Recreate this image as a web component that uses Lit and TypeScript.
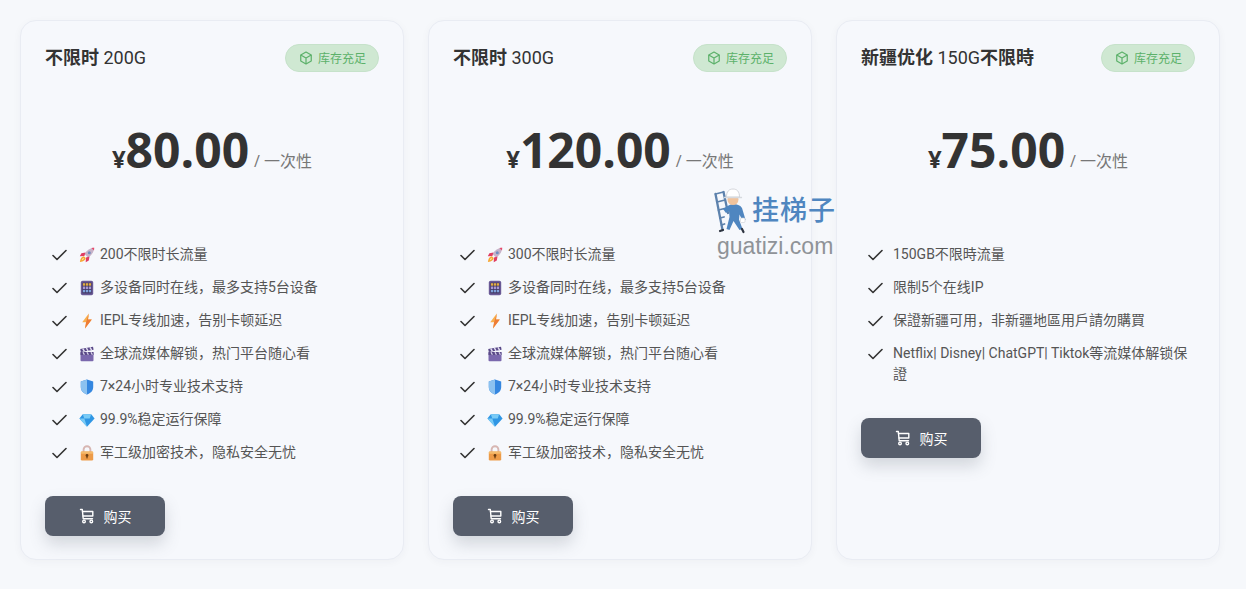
import { LitElement, html, css, svg } from "lit";
import { customElement } from "lit/decorators.js";

const emoji: Record<string, unknown> = {
  rocket: svg`<path d="M15.200 .8c-4 .2-7.600 2.500-9.700 6.200l3.500 3.500c3.700-2.100 6-5.700 6.200-9.700z" fill="#c7b3c9"/><path d="M15.200 .8l-.2 2.800-2.600-2.600c.9-.2 1.800-.2 2.800-.2z" fill="#e8486a"/><circle cx="10.300" cy="5.700" r="1.500" fill="#6f8fc0"/><path d="M6.500 5.500L2.400 6.200.8 9.300l4.600-.3zM10.500 9.500l-.7 4.100-3.100 1.600.3-4.600z" fill="#e03d62"/><path d="M4.900 9.300c-2 .3-3.500 1.800-4 5.800 4-.5 5.500-2 5.800-4z" fill="#f7a733"/><path d="M4.500 11c-.9.300-1.500 1-1.700 2.200 1.200-.2 1.900-.8 2.200-1.700z" fill="#fde3a0"/>`,
  abacus: svg`<rect x="1.800" y=".8" width="12.400" height="14.400" rx="1.800" fill="#6a5a96"/><rect x="3.400" y="2.600" width="9.200" height="10.800" fill="#40345f"/><g fill="#e2ad45"><rect x="3.900" y="3.200" width="2.300" height="2.500"/><rect x="6.850" y="3.200" width="2.300" height="2.500"/><rect x="9.800" y="3.200" width="2.300" height="2.500"/></g><g fill="#a797d4"><rect x="3.900" y="6.500" width="2.300" height="2.500"/><rect x="6.850" y="6.500" width="2.300" height="2.500"/><rect x="9.800" y="6.500" width="2.300" height="2.500"/></g><g fill="#7fa2dc"><rect x="3.900" y="9.800" width="2.300" height="2.500"/><rect x="6.850" y="9.800" width="2.300" height="2.500"/><rect x="9.800" y="9.800" width="2.300" height="2.500"/></g>`,
  bolt: svg`<path d="M9.800 .6L3.200 9.200h3.900L6 15.400 12.800 6.600H9z" fill="#f8b04e"/><path d="M9.800 .6L7.100 9.200 6 15.400 12.800 6.600H9z" fill="#ee7c36"/>`,
  clapper: svg`<rect x="1.500" y="6" width="13" height="9.200" rx="1" fill="#7a68ad"/><rect x="1.500" y="6" width="13" height="3" fill="#5a4a88"/><path d="M1.200 3l12.800-2.200.6 2.900L1.800 6z" fill="#584887"/><path d="M3.800 2.600l1.600 2.800M7.400 2l1.600 2.800M11 1.400l1.600 2.800" stroke="#e0dbef" stroke-width="1.500"/><path d="M4 6.300l1.400 2.500M8 6.300l1.400 2.500M12 6.300l1.400 2.500" stroke="#d8d2ea" stroke-width="1.300"/>`,
  shield: svg`<path d="M8 .6l6.200 2v5.400c0 3.600-2.500 6.300-6.200 7.400-3.700-1.100-6.200-3.800-6.200-7.400V2.600z" fill="#3587e0"/><path d="M8 .6v14.800c-3.700-1.100-6.200-3.800-6.200-7.400V2.600z" fill="#8cc2f0"/>`,
  gem: svg`<path d="M3.800 2.200h8.400L15.600 6.500 8 14.800.4 6.500z" fill="#2f96e4"/><path d="M3.800 2.200h8.400L10.700 6.500H5.300zM.4 6.500h4.900L8 14.800z" fill="#79cbf6"/>`,
  lock: svg`<path d="M4.600 7.500V4.600a3.400 3.400 0 0 1 6.800 0v2.900" fill="none" stroke="#d7b6b2" stroke-width="1.900"/><rect x="1.800" y="6.500" width="12.400" height="9" rx="1.300" fill="#ed9b48"/><rect x="1.800" y="6.500" width="12.400" height="2.200" rx="1" fill="#f5bb6c"/><circle cx="8" cy="10.400" r="1.400" fill="#6a3d12"/><rect x="7.400" y="10.400" width="1.200" height="3" fill="#6a3d12"/>`,
};

type Feature = { e?: string; t: string };
const common = (first: string): Feature[] => [
  { e: "rocket", t: first },
  { e: "abacus", t: "多设备同时在线，最多支持5台设备" },
  { e: "bolt", t: "IEPL专线加速，告别卡顿延迟" },
  { e: "clapper", t: "全球流媒体解锁，热门平台随心看" },
  { e: "shield", t: "7×24小时专业技术支持" },
  { e: "gem", t: "99.9%稳定运行保障" },
  { e: "lock", t: "军工级加密技术，隐私安全无忧" },
];

const plans = [
  { name: "不限时", rest: " 200G", price: "80.00", features: common("200不限时长流量") },
  { name: "不限时", rest: " 300G", price: "120.00", features: common("300不限时长流量") },
  {
    name: "新疆优化",
    rest: " 150G",
    tail: "不限時",
    price: "75.00",
    features: [
      { t: "150GB不限時流量" },
      { t: "限制5个在线IP" },
      { t: "保證新疆可用，非新疆地區用戶請勿購買" },
      { t: "Netflix| Disney| ChatGPT| Tiktok等流媒体解锁保證" },
    ] as Feature[],
  },
];

@customElement("app-root")
export class AppRoot extends LitElement {
  static styles = css`
    :host {
      display: block;
      height: 589px;
      overflow: hidden;
      position: relative;
      background: #f6f8fb;
      color: #333;
      font-family: "Open Sans", "Noto Sans CJK SC", sans-serif;
    }
    .grid {
      display: grid;
      grid-template-columns: repeat(3, 384px);
      gap: 24px;
      padding: 20px 0 0 20px;
    }
    .card {
      box-sizing: border-box;
      height: 540px;
      background: #f6f8fc;
      border: 1px solid #e9ecf3;
      border-radius: 16px;
      padding: 23px 24px;
      box-shadow: 0 2px 8px rgba(40, 50, 80, 0.04);
    }
    .head {
      display: flex;
      justify-content: space-between;
      align-items: center;
      height: 28px;
    }
    .title {
      font-family: Roboto, "Noto Sans CJK SC", sans-serif;
      font-size: 18px;
      font-weight: 400;
      line-height: 28px;
      color: #333;
    }
    .title b {
      font-weight: 700;
    }
    .badge {
      display: flex;
      align-items: center;
      gap: 5px;
      height: 28px;
      box-sizing: border-box;
      padding: 0 12px 0 13px;
      border: 1px solid #c6e2ca;
      border-radius: 14px;
      background: #cfe8d2;
      color: #5cb16a;
      font-size: 12px;
    }
    .badge svg {
      display: block;
    }
    .price {
      display: flex;
      justify-content: center;
      align-items: baseline;
      margin-top: 45px;
      height: 66px;
      line-height: 66px;
      color: #333;
    }
    .cur {
      font-size: 24px;
      font-weight: 700;
    }
    .num {
      font-size: 48px;
      font-weight: 700;
    }
    .per {
      position: relative;
      top: -1px;
      font-size: 16px;
      color: #777;
      margin-left: 5px;
    }
    ul {
      list-style: none;
      margin: 61px 0 0;
      padding: 0 0 0 7px;
      display: flex;
      flex-direction: column;
      gap: 12px;
    }
    li {
      display: flex;
      gap: 9px;
      font-family: Roboto, "Noto Sans CJK SC", sans-serif;
      font-size: 14px;
      line-height: 21px;
      color: #555;
    }
    .check {
      flex: none;
      width: 16px;
      height: 21px;
      display: flex;
      align-items: center;
    }
    .emoji {
      flex: none;
      width: 21px;
      height: 21px;
      margin-right: -9px;
      margin-left: 2px;
      display: flex;
      align-items: center;
    }
    .btn {
      display: flex;
      align-items: center;
      justify-content: center;
      gap: 9px;
      width: 120px;
      height: 40px;
      margin-top: 33px;
      border: 0;
      border-radius: 8px;
      background: #575e6c;
      color: #fff;
      font: inherit;
      font-size: 14px;
      box-shadow: 0 8px 16px rgba(87, 94, 108, 0.22);
    }
    .mark {
      position: absolute;
      left: 714px;
      top: 187px;
      width: 122px;
      height: 72px;
    }
    .mark svg {
      position: absolute;
      left: 0;
      top: 0;
    }
    .brand {
      position: absolute;
      left: 38px;
      top: 3px;
      font-size: 27px;
      line-height: 40px;
      font-weight: 500;
      letter-spacing: 1px;
      color: #4f86c0;
      white-space: nowrap;
    }
    .site {
      position: absolute;
      left: 3px;
      top: 47px;
      font-family: "Liberation Sans", sans-serif;
      font-size: 23px;
      line-height: 24px;
      color: #8f9398;
      white-space: nowrap;
    }
  `;

  private cart() {
    return html`<svg width="16" height="16" viewBox="0 0 16 16" fill="none" stroke="#fff" stroke-width="1.400" stroke-linecap="round" stroke-linejoin="round">
      <path d="M1.500 1.500h1.800l.9 9.200h9.300" /><path d="M3.500 3.500h10.300v4.500H4" />
      <circle cx="5" cy="13.400" r="1.300" /><circle cx="12.300" cy="13.400" r="1.300" />
    </svg>`;
  }

  render() {
    return html`<div class="grid">
        ${plans.map(
          (p) => html`<div class="card">
            <div class="head">
              <div class="title"><b>${p.name}</b>${p.rest}${p.tail ? html`<b>${p.tail}</b>` : ""}</div>
              <div class="badge">
                <svg width="14" height="14" viewBox="0 0 16 16" fill="none" stroke="#5cb16a" stroke-width="1.400" stroke-linejoin="round">
                  <path d="M8 1.200l6 3.300v7L8 14.800l-6-3.300v-7z" /><path d="M2 4.500L8 8l6-3.500M8 8v6.800" />
                </svg>
                库存充足
              </div>
            </div>
            <div class="price">
              <span class="cur">¥</span><span class="num">${p.price}</span><span class="per">/ 一次性</span>
            </div>
            <ul>
              ${p.features.map(
                (f) => html`<li>
                  <span class="check">
                    <svg width="15" height="12" viewBox="0 0 15 12" fill="none" stroke="#333" stroke-width="1.600" stroke-linecap="round" stroke-linejoin="round"><path d="M1 6.500l4 4L14 1.500" /></svg>
                  </span>
                  ${f.e
                    ? html`<span class="emoji"><svg width="16" height="16" viewBox="0 0 16 16">${emoji[f.e]}</svg></span>`
                    : ""}
                  <span>${f.t}</span>
                </li>`,
              )}
            </ul>
            <button class="btn">${this.cart()}<span>购买</span></button>
          </div>`,
        )}
      </div>
      <div class="mark">
        <svg width="36" height="48" viewBox="0 0 36 48" fill="none">
          <g stroke="#5d82ad" stroke-linecap="round">
            <path d="M1.500 7L8.500 43M9.500 5L14 26" stroke-width="2.300" />
            <path d="M1.500 7l8-2M3 15l8-2M4.500 23l8-2M6 31l4-1M7.500 38l3-1" stroke-width="1.800" />
          </g>
          <path d="M9 22l5-3 3 4-5 3z" fill="#4f86c0" />
          <path d="M12 21c2-3 5-4 7-4 4 0 7 1 9 4l3 10 .5 2-3 .5-3-6-.5 5 3.500 9.500-3 1-6-9-4 9-3-1 3-12-.5-6z" fill="#4f86c0" />
          <circle cx="19" cy="12.500" r="5.500" fill="#f1c39c" />
          <path d="M12.500 10c0-5.500 2.500-8 6.500-8s6.500 2.500 6.500 8z" fill="#fff" stroke="#c9ccd2" stroke-width=".8" />
          <path d="M10.500 10.500h17" stroke="#d6d9de" stroke-width="1.300" stroke-linecap="round" />
          <rect x="26.500" y="31" width="4.500" height="4.500" rx="1" fill="#fff" stroke="#c9ccd2" stroke-width=".6" />
          <path d="M9 43l-3 1M28 42l1.500 3" stroke="#2d3440" stroke-width="2.200" stroke-linecap="round" />
        </svg>
        <div class="brand">挂梯子</div>
        <div class="site">guatizi.com</div>
      </div>`;
  }
}
